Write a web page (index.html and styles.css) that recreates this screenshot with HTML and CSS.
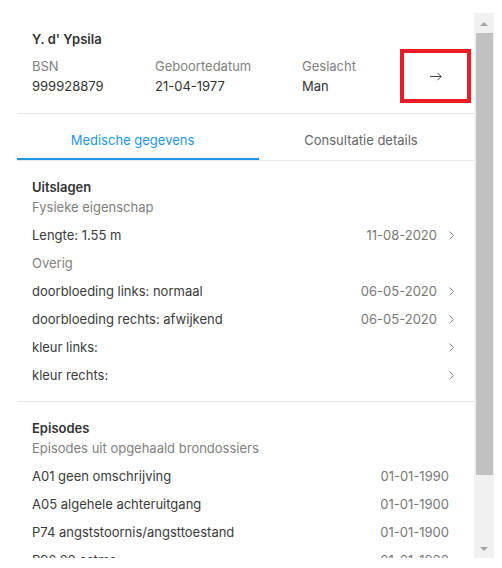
FILE: index.html
```html
<!DOCTYPE html>
<html lang="nl">
<head>
    <meta charset="UTF-8">
    <meta name="viewport" content="width=device-width, initial-scale=1.0">
    <title>Patiëntgegevens</title>
    <link rel="stylesheet" href="styles.css">
</head>
<body>
    <div class="frame">
        <div class="panel">
            <div class="patient">
                <div class="patient-name">Y. d' Ypsila</div>
                <div class="patient-row">
                    <div class="field field-bsn">
                        <div class="label">BSN</div>
                        <div class="value">999928879</div>
                    </div>
                    <div class="field field-dob">
                        <div class="label">Geboortedatum</div>
                        <div class="value">21-04-1977</div>
                    </div>
                    <div class="field">
                        <div class="label">Geslacht</div>
                        <div class="value">Man</div>
                    </div>
                    <button class="open-btn" type="button">
                        <svg width="12" height="9" viewBox="0 0 12 9"><path d="M0 4.5h11.2M7.5 0.8l3.7 3.7-3.7 3.7" fill="none" stroke="#444" stroke-width="1"/></svg>
                    </button>
                </div>
            </div>

            <div class="tabs">
                <div class="tab active">Medische gegevens</div>
                <div class="tab tab-second">Consultatie details</div>
            </div>

            <section class="block">
                <h2>Uitslagen</h2>
                <p class="sub">Fysieke eigenschap</p>
                <ul class="rows">
                    <li class="row">
                        <span class="text">Lengte: 1.55 m</span>
                        <span class="date">11-08-2020</span>
                        <svg class="chev" width="5" height="9" viewBox="0 0 5 9"><path d="M0.5 0.5l4 4-4 4" fill="none" stroke="#888"/></svg>
                    </li>
                    <li class="row group">Overig</li>
                    <li class="row">
                        <span class="text">doorbloeding links: normaal</span>
                        <span class="date">06-05-2020</span>
                        <svg class="chev" width="5" height="9" viewBox="0 0 5 9"><path d="M0.5 0.5l4 4-4 4" fill="none" stroke="#888"/></svg>
                    </li>
                    <li class="row">
                        <span class="text">doorbloeding rechts: afwijkend</span>
                        <span class="date">06-05-2020</span>
                        <svg class="chev" width="5" height="9" viewBox="0 0 5 9"><path d="M0.5 0.5l4 4-4 4" fill="none" stroke="#888"/></svg>
                    </li>
                    <li class="row">
                        <span class="text">kleur links:</span>
                        <svg class="chev" width="5" height="9" viewBox="0 0 5 9"><path d="M0.5 0.5l4 4-4 4" fill="none" stroke="#888"/></svg>
                    </li>
                    <li class="row">
                        <span class="text">kleur rechts:</span>
                        <svg class="chev" width="5" height="9" viewBox="0 0 5 9"><path d="M0.5 0.5l4 4-4 4" fill="none" stroke="#888"/></svg>
                    </li>
                </ul>
            </section>

            <section class="block episodes">
                <h2>Episodes</h2>
                <p class="sub">Episodes uit opgehaald brondossiers</p>
                <ul class="rows">
                    <li class="row"><span class="text">A01 geen omschrijving</span><span class="date">01-01-1990</span></li>
                    <li class="row"><span class="text">A05 algehele achteruitgang</span><span class="date">01-01-1900</span></li>
                    <li class="row"><span class="text">P74 angststoornis/angsttoestand</span><span class="date">01-01-1900</span></li>
                    <li class="row"><span class="text">P96.00 astma</span><span class="date">01-01-1900</span></li>
                </ul>
            </section>
        </div>

        <div class="scrollbar">
            <div class="sb-btn"><span class="sb-arrow up"></span></div>
            <div class="sb-track"><div class="sb-thumb"></div></div>
            <div class="sb-btn"><span class="sb-arrow down"></span></div>
        </div>
    </div>
</body>
</html>
```

FILE: styles.css
```css
body {
    margin: 0;
    background: #fff;
    font-family: Inter, "Noto Sans", sans-serif;
    font-size: 13px;
    line-height: 20px;
    color: #333;
}
.frame {
    display: flex;
    margin-top: 13px;
    width: 494px;
    height: 545px;
}
.panel {
    flex: 1;
    min-width: 0;
    padding-left: 17px;
    overflow: hidden;
}

/* scrollbar */
.scrollbar {
    flex: 0 0 20px;
    display: flex;
    flex-direction: column;
    background: #f1f1f1;
}
.sb-btn {
    height: 20px;
    display: flex;
    align-items: center;
    justify-content: center;
}
.sb-arrow {
    width: 0;
    height: 0;
    border-left: 4px solid transparent;
    border-right: 4px solid transparent;
}
.sb-arrow.up {
    border-bottom: 4px solid #a3a3a3;
    margin-top: 1px;
}
.sb-arrow.down {
    border-top: 4px solid #a3a3a3;
    margin-top: 1px;
}
.sb-track {
    flex: 1;
}
.sb-thumb {
    height: 442px;
    margin: 0 1px 0 2px;
    background: #c1c1c1;
}

/* patient header */
.patient {
    padding: 16px 3px 10px 15px;
    border-bottom: 1px solid #e6e6e6;
}
.patient-name {
    font-weight: 600;
}
.patient-row {
    display: flex;
    align-items: center;
}
.field-bsn {
    width: 123px;
}
.field-dob {
    width: 147px;
}
.label {
    color: #808080;
}
.value {
    color: #333;
}
.open-btn {
    margin-left: auto;
    width: 71px;
    height: 54px;
    border: 4px solid #ed1c24;
    background: #fff;
    padding: 0;
    display: flex;
    align-items: center;
    justify-content: center;
    cursor: pointer;
}

/* tabs */
.tabs {
    display: flex;
    border-bottom: 1px solid #e3e8ec;
}
.tab {
    flex: 0 0 242px;
    padding: 16px 11px 8px 0;
    box-sizing: border-box;
    text-align: center;
    color: #666;
    border-bottom: 2px solid transparent;
}
.tab-second {
    flex: 1;
}
.tab.active {
    color: #1e96e3;
    border-bottom-color: #1e96e3;
}

/* blocks */
.block {
    padding: 16px 20px 12px 15px;
    border-bottom: 1px solid #e6e6e6;
}
.block h2 {
    margin: 0;
    font-size: 13px;
    line-height: 20px;
    font-weight: 600;
    color: #333;
}
.sub {
    margin: 0 0 4px;
    color: #808080;
}
.rows {
    list-style: none;
    margin: 0;
    padding: 0;
}
.row {
    display: flex;
    align-items: center;
    height: 28px;
    color: #3a3a3a;
}
.row .text {
    flex: 1;
}
.row.group {
    color: #808080;
}
.date {
    color: #777;
}
.chev {
    margin-left: 12px;
}
.episodes {
    border-bottom: none;
    padding-right: 25px;
}
```
